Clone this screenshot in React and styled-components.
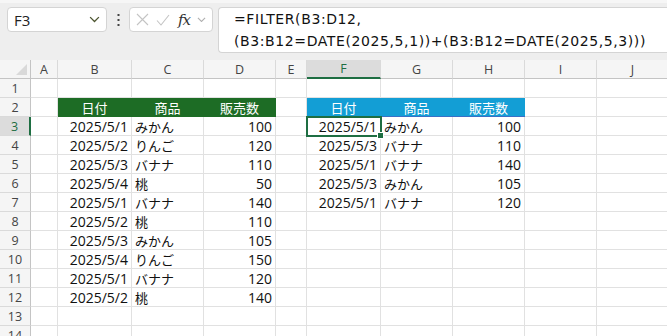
import React from "react";
import styled, { createGlobalStyle } from "styled-components";

const GREEN = "#1d6c25";
const BLUE = "#139ed5";
const SELECT = "#1e6e42";
const GRID = "#e1e1e1";

const COLS = [31, 27, 74, 72, 72, 31, 74, 72, 72, 72, 72];
const LETTERS = ["A", "B", "C", "D", "E", "F", "G", "H", "I", "J"];

const sales = [
  ["2025/5/1", "みかん", 100],
  ["2025/5/2", "りんご", 120],
  ["2025/5/3", "バナナ", 110],
  ["2025/5/4", "桃", 50],
  ["2025/5/1", "バナナ", 140],
  ["2025/5/2", "桃", 110],
  ["2025/5/3", "みかん", 105],
  ["2025/5/4", "りんご", 150],
  ["2025/5/1", "バナナ", 120],
  ["2025/5/2", "桃", 140],
];

const filtered = [
  ["2025/5/1", "みかん", 100],
  ["2025/5/3", "バナナ", 110],
  ["2025/5/1", "バナナ", 140],
  ["2025/5/3", "みかん", 105],
  ["2025/5/1", "バナナ", 120],
];

const headers = ["日付", "商品", "販売数"];

const GlobalStyle = createGlobalStyle`
  html, body {
    margin: 0;
    padding: 0;
    background: #fff;
  }
  body {
    font-family: "Open Sans", "Noto Sans CJK JP", sans-serif;
    color: #000;
  }
`;

const Window = styled.div`
  width: 667px;
  height: 336px;
  overflow: hidden;
  background: #fff;
`;

const Toolbar = styled.div`
  height: 60px;
  box-sizing: border-box;
  background: #eeeeee;
  border-top: 3px solid #f6f6f6;
  padding: 4px 0 0 7px;
  display: flex;
  align-items: flex-start;
  overflow: hidden;
`;

const Box = styled.div`
  box-sizing: border-box;
  flex-shrink: 0;
  height: 25px;
  background: #fff;
  border: 1px solid #d4d4d4;
  border-radius: 4px;
  display: flex;
  align-items: center;
`;

const NameBox = styled(Box)`
  width: 100px;
  padding: 0 6px 0 6px;
  justify-content: space-between;
  font-family: "Open Sans", sans-serif;
  font-size: 15px;
  color: #222;
`;

const Dots = styled.div`
  flex-shrink: 0;
  width: 22px;
  height: 25px;
  display: flex;
  align-items: center;
  justify-content: center;
`;

const FnBox = styled(Box)`
  width: 84px;
  padding: 0 4px 0 6px;
  gap: 7px;
`;

const Fx = styled.span`
  font-family: "DejaVu Serif", "Liberation Serif", serif;
  font-style: italic;
  font-size: 15px;
  color: #333;
  letter-spacing: -1px;
  margin-left: 1px;
`;

const FormulaBox = styled.div`
  box-sizing: border-box;
  flex-shrink: 0;
  margin-left: 5px;
  width: 470px;
  height: 46px;
  background: #fff;
  border: 1px solid #d4d4d4;
  border-right: none;
  border-radius: 4px 0 0 4px;
  padding: 0 0 0 15px;
  font-family: "DejaVu Sans", sans-serif;
  font-size: 14px;
  letter-spacing: 0.6px;
  line-height: 22px;
  white-space: pre;
  color: #111;
`;

const Sheet = styled.div`
  display: grid;
  grid-template-columns: ${COLS.map((w) => w + "px").join(" ")};
  grid-auto-rows: 19px;
`;

const Head = styled.div`
  box-sizing: border-box;
  background: ${(p) => (p.$active ? "#dcdcdc" : "#f5f5f5")};
  color: ${(p) => (p.$active ? SELECT : "#444")};
  font-family: "Open Sans", sans-serif;
  font-size: 12.5px;
  display: flex;
  align-items: center;
  justify-content: center;
  position: relative;
`;

const ColHead = styled(Head)`
  border-right: 1px solid #dadada;
  border-bottom: ${(p) => (p.$active ? `2px solid ${SELECT}` : "1px solid #c4c4c4")};
`;

const RowHead = styled(Head)`
  border-bottom: 1px solid #dadada;
  border-right: ${(p) => (p.$active ? `2px solid ${SELECT}` : "1px solid #c4c4c4")};
`;

const Corner = styled(Head)`
  border-right: 1px solid #c4c4c4;
  border-bottom: 1px solid #c4c4c4;
  &::after {
    content: "";
    position: absolute;
    right: 3px;
    bottom: 3px;
    width: 11px;
    height: 11px;
    background: #d9d9d9;
    clip-path: polygon(100% 0, 100% 100%, 0 100%);
  }
`;

const Cell = styled.div`
  box-sizing: border-box;
  position: relative;
  display: flex;
  align-items: center;
  padding: 0 3px 0 3px;
  white-space: nowrap;
  font-size: ${(p) => (p.$jp ? "13px" : "14px")};
  justify-content: ${(p) =>
    p.$align === "right" ? "flex-end" : p.$align === "center" ? "center" : "flex-start"};
  background: ${(p) => p.$fill || "#fff"};
  color: ${(p) => (p.$fill ? "#fff" : "#111")};
  border-right: 1px solid ${(p) => p.$fill || GRID};
  border-bottom: 1px solid ${(p) => p.$fill || GRID};
`;

const SpillOutline = styled.div`
  position: absolute;
  left: -1px;
  top: -1px;
  width: 219px;
  height: 96px;
  box-sizing: border-box;
  border: 1px solid #3a6fc6;
  pointer-events: none;
`;

const Selection = styled.div`
  position: absolute;
  left: -1px;
  top: -1px;
  width: 76px;
  height: 21px;
  box-sizing: border-box;
  border: 2px solid ${SELECT};
  z-index: 2;
  &::after {
    content: "";
    position: absolute;
    right: -4px;
    bottom: -4px;
    width: 5px;
    height: 5px;
    background: ${SELECT};
    border: 1px solid #fff;
  }
`;

const Chevron = ({ color = "#555", size = 10 }) => (
  <svg width={size} height={size * 0.6} viewBox="0 0 10 6">
    <path d="M1 1l4 4 4-4" fill="none" stroke={color} strokeWidth="1.2" />
  </svg>
);

function cellFor(r, c) {
  // r: row number, c: column index (0 = A)
  if (r === 2 && c >= 1 && c <= 3)
    return { fill: GREEN, align: "center", jp: true, text: headers[c - 1] };
  if (r === 2 && c >= 5 && c <= 7)
    return { fill: BLUE, align: "center", jp: true, text: headers[c - 5] };
  if (r >= 3 && r <= 12 && c >= 1 && c <= 3) {
    const row = sales[r - 3];
    return c === 2
      ? { align: "left", jp: true, text: row[1] }
      : { align: "right", text: row[c === 1 ? 0 : 2] };
  }
  if (r >= 3 && r <= 7 && c >= 5 && c <= 7) {
    const row = filtered[r - 3];
    return c === 6
      ? { align: "left", jp: true, text: row[1] }
      : { align: "right", text: row[c === 5 ? 0 : 2] };
  }
  return {};
}

export default function App() {
  const rows = Array.from({ length: 14 }, (_, i) => i + 1);
  return (
    <Window>
      <GlobalStyle />
      <Toolbar>
        <NameBox>
          F3
          <Chevron color="#4d5530" size={11} />
        </NameBox>
        <Dots>
          <svg width="3" height="12" viewBox="0 0 3 12">
            <rect x="0.5" y="0" width="2" height="2" fill="#444" />
            <rect x="0.5" y="5" width="2" height="2" fill="#444" />
            <rect x="0.5" y="10" width="2" height="2" fill="#444" />
          </svg>
        </Dots>
        <FnBox>
          <svg width="13" height="13" viewBox="0 0 13 13">
            <path d="M1 1l11 11M12 1L1 12" stroke="#c4c4c4" strokeWidth="1.1" fill="none" />
          </svg>
          <svg width="14" height="12" viewBox="0 0 14 12">
            <path d="M1 6.5l4 4.5 8-10" stroke="#c4c4c4" strokeWidth="1.1" fill="none" />
          </svg>
          <Fx>fx</Fx>
          <Chevron color="#b0b0b0" size={9} />
        </FnBox>
        <FormulaBox>
          {"=FILTER(B3:D12,\n(B3:B12=DATE(2025,5,1))+(B3:B12=DATE(2025,5,3)))"}
        </FormulaBox>
      </Toolbar>
      <Sheet>
        <Corner />
        {LETTERS.map((l) => (
          <ColHead key={l} $active={l === "F"}>
            {l}
          </ColHead>
        ))}
        {rows.map((r) => (
          <React.Fragment key={r}>
            <RowHead $active={r === 3}>{r}</RowHead>
            {LETTERS.map((l, c) => {
              const cell = cellFor(r, c);
              return (
                <Cell key={l} $fill={cell.fill} $align={cell.align} $jp={cell.jp}>
                  {cell.text}
                  {r === 3 && c === 5 && (
                    <>
                      <SpillOutline />
                      <Selection />
                    </>
                  )}
                </Cell>
              );
            })}
          </React.Fragment>
        ))}
      </Sheet>
    </Window>
  );
}
